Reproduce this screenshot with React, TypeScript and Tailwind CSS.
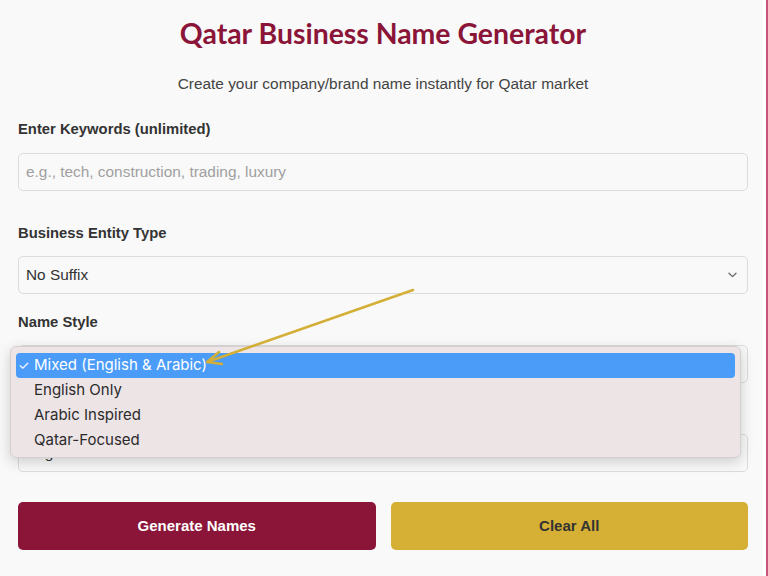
import React from "react";

const labelCls = "block text-[14.8px] leading-[20px] font-bold text-[#333] font-['Liberation_Sans',Arial,sans-serif]";
const fieldCls =
  "h-[38px] w-full rounded-[5px] border border-[#dcdcdc] bg-[#f9f9f9] px-[7px] flex items-center text-[15.4px] font-['Liberation_Sans',Arial,sans-serif]";

function Chevron() {
  return (
    <svg width="9" height="6" viewBox="0 0 9 6" className="shrink-0">
      <path d="M1 1.2 L4.5 4.6 L8 1.2" fill="none" stroke="#666" strokeWidth="1.3" strokeLinecap="round" strokeLinejoin="round" />
    </svg>
  );
}

function SelectBox({ value }: { value: string }) {
  return (
    <div className={`${fieldCls} justify-between pr-[10px] text-[#333]`}>
      <span>{value}</span>
      <Chevron />
    </div>
  );
}

const options = ["Mixed (English & Arabic)", "English Only", "Arabic Inspired", "Qatar-Focused"];

// open native-style menu drawn over the Name Style select
function StyleMenu() {
  return (
    <div className="absolute left-[-8px] top-[1px] w-[731px] rounded-[6px] bg-[#ede4e6] border border-[#d6cfd1] shadow-[0_4px_14px_rgba(0,0,0,0.18)] px-[5px] pt-[6px] pb-[4px] font-['Inter','Roboto',sans-serif] text-[15px] z-10">
      {options.map((o, i) =>
        i === 0 ? (
          <div key={o} className="h-[25px] rounded-[4px] bg-[#4b9cf9] text-white flex items-center pl-[2px]">
            <span className="w-[16px] text-[13px]">✓</span>
            <span>{o}</span>
          </div>
        ) : (
          <div key={o} className="h-[25px] text-[#2b2b2b] flex items-center pl-[18px]">
            {o}
          </div>
        )
      )}
    </div>
  );
}

export default function App() {
  return (
    <div className="relative flex h-[576px] w-full bg-[#f9f9f9] overflow-hidden">
      <div className="flex-1 pl-[18px] pr-[15px] pt-[16px]">
        <h1 className="text-center text-[28.4px] leading-[34px] font-bold text-[#8a1538] font-['Lato',sans-serif]">
          Qatar Business Name Generator
        </h1>
        <p className="mt-[23px] text-center text-[15.4px] leading-[22px] text-[#444] font-['Liberation_Sans',Arial,sans-serif]">
          Create your company/brand name instantly for Qatar market
        </p>

        <label className={`${labelCls} mt-[24px]`}>Enter Keywords (unlimited)</label>
        <div className={`${fieldCls} mt-[14px] text-[#a0a0a0]`}>e.g., tech, construction, trading, luxury</div>

        <label className={`${labelCls} mt-[32px]`}>Business Entity Type</label>
        <div className="mt-[13px]">
          <SelectBox value="No Suffix" />
        </div>

        <label className={`${labelCls} mt-[18px]`}>Name Style</label>
        <div className="relative mt-[13px]">
          <SelectBox value="" />
          <StyleMenu />
        </div>

        {/* label of the next field sits hidden under the menu */}
        <div className="h-[20px] mt-[18px]" />
        <div className="mt-[13px]">
          <SelectBox value="English" />
        </div>

        <div className="mt-[30px] grid grid-cols-2 gap-[15px] font-['Liberation_Sans',Arial,sans-serif]">
          <button className="h-[48px] rounded-[5px] bg-[#8a1538] text-white text-[15px] font-bold">Generate Names</button>
          <button className="h-[48px] rounded-[5px] bg-[#d5b035] text-[#333] text-[15px] font-bold">Clear All</button>
        </div>
      </div>
      <div className="w-[3px] bg-white" />
      <div className="w-[2px] bg-[#c2567a]" />

      <svg className="absolute left-0 top-0 pointer-events-none z-20" width="768" height="576" viewBox="0 0 768 576">
        <line x1="413" y1="290" x2="210" y2="361" stroke="#d4af37" strokeWidth="2.5" strokeLinecap="round" />
        <path d="M219 352 L207 362 L222 364" fill="none" stroke="#d4af37" strokeWidth="2.5" strokeLinecap="round" strokeLinejoin="round" />
      </svg>
    </div>
  );
}
